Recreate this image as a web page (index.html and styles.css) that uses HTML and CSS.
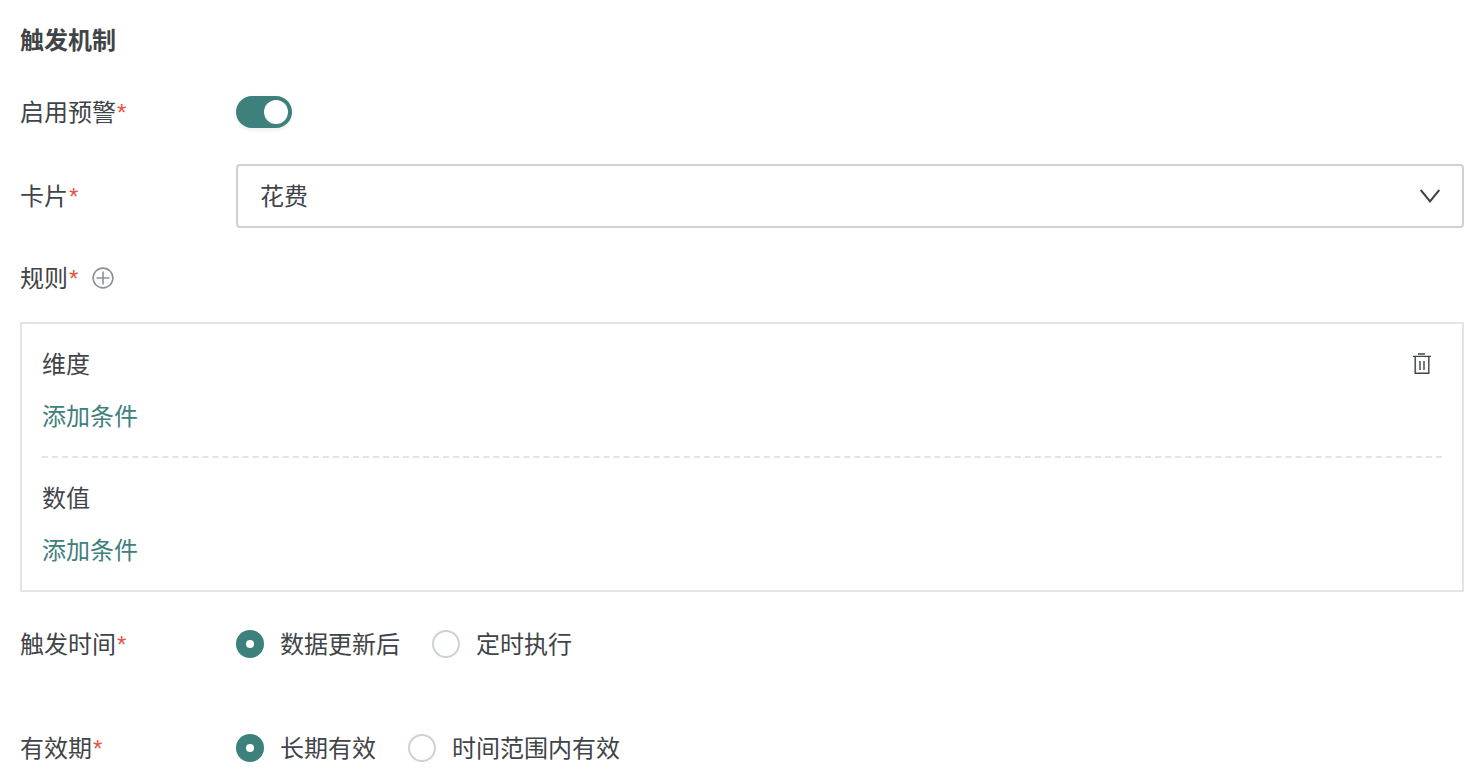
FILE: index.html
```
<!DOCTYPE html>
<html lang="zh-CN">
<head>
<meta charset="utf-8">
<title>触发机制</title>
<link rel="stylesheet" href="styles.css">
</head>
<body>
<main class="page">
  <h2 class="title">触发机制</h2>

  <div class="row row-switch">
    <label class="label">启用预警<span class="req">*</span></label>
    <span class="switch"><span class="knob"></span></span>
  </div>

  <div class="row row-select">
    <label class="label">卡片<span class="req">*</span></label>
    <div class="select">
      <span class="text">花费</span>
      <svg class="chevron" width="20" height="14" viewBox="0 0 20 14"><path d="M.7 1 10 12.4 19.3 1" fill="none" stroke="#3f4448" stroke-width="2"/></svg>
    </div>
  </div>

  <div class="rule-head">
    <label class="text">规则<span class="req">*</span></label>
    <svg class="plus" width="22" height="22" viewBox="0 0 22 22"><circle cx="11" cy="11" r="9.9" fill="none" stroke="#8c9298" stroke-width="1.6"/><path d="M11 4.5v13M4.5 11h13" fill="none" stroke="#8c9298" stroke-width="1.6"/></svg>
  </div>

  <section class="box">
    <div class="group group-first">
      <div class="group-head">
        <span>维度</span>
        <svg class="trash" width="18" height="22" viewBox="0 0 18 22"><path d="M5 1h7M0 3.4h18" fill="none" stroke="#3f4448" stroke-width="1.4"/><path d="M2.2 3.6v16.7h13.6V3.6M7 8v9M11 8v9" fill="none" stroke="#3f4448" stroke-width="1.4"/></svg>
      </div>
      <a class="add">添加条件</a>
    </div>
    <div class="group">
      <div class="group-head"><span>数值</span></div>
      <a class="add">添加条件</a>
    </div>
  </section>

  <div class="row row-radio row-trigger">
    <label class="label">触发时间<span class="req">*</span></label>
    <div class="radios">
      <span class="radio on"></span><span class="radio-text">数据更新后</span>
      <span class="radio"></span><span class="radio-text">定时执行</span>
    </div>
  </div>

  <div class="row row-radio row-valid">
    <label class="label">有效期<span class="req">*</span></label>
    <div class="radios">
      <span class="radio on"></span><span class="radio-text">长期有效</span>
      <span class="radio"></span><span class="radio-text">时间范围内有效</span>
    </div>
  </div>
</main>
</body>
</html>
```
FILE: styles.css
```
* { box-sizing: border-box; }
html, body { margin: 0; height: 780px; overflow: hidden; background: #fff; }
body {
  font-family: "Helvetica Neue", "Liberation Sans", "Noto Sans CJK SC", sans-serif;
  font-size: 24px;
  line-height: 24px;
  color: #3f4448;
}
.page { padding: 16px 20px 0; }
.title { margin: 0; height: 48px; font-size: 24px; line-height: 50px; font-weight: 700; }
.row { display: flex; align-items: center; }
.label { width: 216px; flex: none; padding-top: 2px; }
.text { padding-top: 2px; }
.req { color: #e5533d; margin-left: 1px; }
.row-switch { margin-top: 32px; height: 32px; }
.switch {
  display: flex; align-items: center; justify-content: flex-end;
  width: 56px; height: 32px; padding-right: 4px;
  border-radius: 16px; background: #3e807c;
  box-shadow: 0 2px 4px rgba(0,0,0,.08);
}
.knob { width: 24px; height: 24px; border-radius: 50%; background: #fff; }
.row-select { margin-top: 36px; height: 64px; }
.select {
  flex: 1; height: 64px; padding: 0 22px;
  display: flex; align-items: center; justify-content: space-between;
  background: #fff; border: 2px solid #cdd2d8; border-radius: 4px;
}
.chevron { flex: none; }
.rule-head { margin-top: 38px; height: 24px; display: flex; align-items: center; gap: 14px; }
.plus { flex: none; }
.box { margin-top: 32px; height: 270px; padding: 0 20px; border: 2px solid #e2e4ea; }
.group { height: 132px; padding-top: 29px; }
.group-first { height: 134px; border-bottom: 2px dashed #e2e4ea; }
.group-head { height: 24px; display: flex; align-items: flex-start; justify-content: space-between; }
.trash { margin-right: 11px; }
.add { display: block; margin-top: 28px; color: #3e807c; }
.row-radio { height: 28px; }
.row-trigger { margin-top: 38px; }
.row-valid { margin-top: 76px; }
.radios { display: flex; align-items: center; }
.radio {
  width: 28px; height: 28px; flex: none; border-radius: 50%;
  border: 2px solid #cdd2d8; background: #fff;
  display: flex; align-items: center; justify-content: center;
}
.radio.on { border: 0; background: #3e807c; }
.radio.on::after { content: ""; width: 8px; height: 8px; border-radius: 50%; background: #fff; }
.radio-text { margin: 0 32px 0 16px; padding-top: 2px; }
```
